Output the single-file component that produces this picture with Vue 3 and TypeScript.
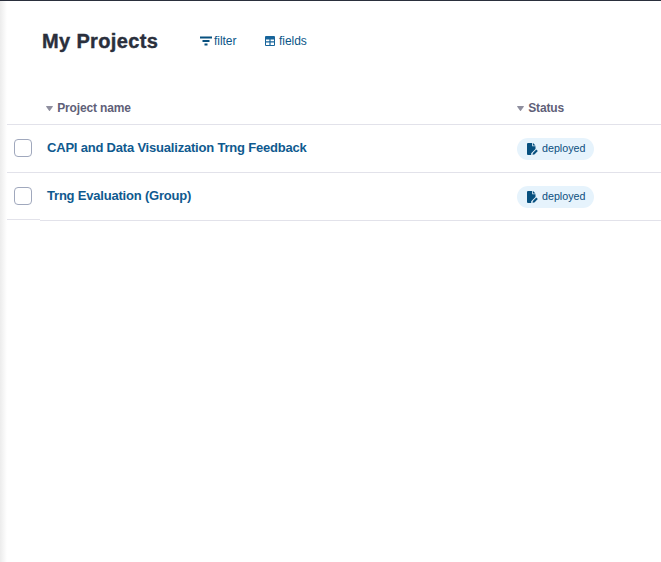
<template>
  <div class="page">
    <header class="top">
      <h1 class="title">My Projects</h1>
      <button class="tool tool-filter">
        <svg width="12" height="10" viewBox="0 0 12 10"><path d="M0 .5h12v2H0zM2.500 4h7v2h-7zM4.500 7.500h3v2h-3z" fill="#07507f" /></svg>
        filter
      </button>
      <button class="tool tool-fields">
        <svg width="10" height="10" viewBox="0 0 10 10"><path fill-rule="evenodd" d="M1 0h8a1 1 0 0 1 1 1v8a1 1 0 0 1-1 1H1a1 1 0 0 1-1-1V1a1 1 0 0 1 1-1zM1 3.500V5.200h3.400V3.500zM5.600 3.500V5.200H9V3.500zM1 6.400V9h3.400V6.400zM5.600 6.400V9H9V6.400z" fill="#17649a" /></svg>
        fields
      </button>
    </header>

    <div class="table">
      <div class="row head">
        <div class="name-col">
          <svg class="caret" width="7" height="5" viewBox="0 0 7 5"><path d="M.6 0h5.800a.5.500 0 0 1 .4.800L3.900 4.700a.5.500 0 0 1-.8 0L.2.800A.5.500 0 0 1 .6 0z" fill="#8f8f9f" /></svg>
          Project name
        </div>
        <div class="status-col">
          <svg class="caret" width="7" height="5" viewBox="0 0 7 5"><path d="M.6 0h5.800a.5.500 0 0 1 .4.800L3.900 4.700a.5.500 0 0 1-.8 0L.2.800A.5.500 0 0 1 .6 0z" fill="#8f8f9f" /></svg>
          Status
        </div>
      </div>
      <div v-for="project in projects" :key="project" class="row body">
        <span class="check"></span>
        <a class="name">{{ project }}</a>
        <div class="status-col">
          <span class="pill">
            <svg width="11" height="12" viewBox="0 0 11 12">
              <path d="M1 0h4.200v3.300h3.300v2.700L4.200 10.300V12H1a1 1 0 0 1-1-1V1a1 1 0 0 1 1-1z" fill="#07507f" />
              <path d="M6 0l2.500 2.500H6z" fill="#07507f" />
              <path d="M5.500 11.800l.4-1.900 3.400-3.400 1.500 1.500-3.400 3.400z" fill="#07507f" />
            </svg>
            <span class="pill-text">deployed</span>
          </span>
        </div>
      </div>
    </div>
  </div>
</template>

<script setup lang="ts">
const projects: string[] = ["CAPI and Data Visualization Trng Feedback", "Trng Evaluation (Group)"];
</script>

<style>
html, body { margin: 0; background: #fff; }
</style>

<style scoped>
.page {
  box-sizing: border-box;
  width: 661px;
  height: 562px;
  overflow: hidden;
  border-top: 1px solid #2a2f3c;
  padding-left: 7px;
  background: linear-gradient(to right, #ececec, #fff 7px);
  font-family: "Liberation Sans", Arial, sans-serif;
}

.top {
  display: flex;
  align-items: center;
  height: 80px;
  padding-left: 35px;
}

.title {
  width: 158px;
  margin: 0;
  font-size: 20px;
  font-weight: 700;
  letter-spacing: 0.36px;
  color: #2a2f3c;
  -webkit-text-stroke: 0.4px #2a2f3c;
}

.tool {
  display: flex;
  align-items: center;
  padding: 0;
  border: 0;
  background: none;
  font: 12px "Liberation Sans", Arial, sans-serif;
  letter-spacing: -0.05px;
  color: #0b5688;
}

.tool-filter { width: 65px; gap: 2px; }
.tool-fields { gap: 4px; }

.row {
  position: relative;
  display: flex;
  align-items: center;
  box-sizing: border-box;
  border-bottom: 1px solid #e2e2ea;
  background: #fff;
}

.head {
  height: 44px;
  padding-top: 10px;
  font-size: 12px;
  font-weight: 700;
  letter-spacing: -0.15px;
  color: #5f5f78;
}

.body { height: 48px; }

/* the checkbox cell's rule sits a pixel higher on the last row */
.body:last-child::before {
  content: "";
  position: absolute;
  left: 0;
  bottom: -1px;
  width: 33px;
  height: 1px;
  border-top: 1px solid #e2e2ea;
  background: #fff;
}

.name-col {
  width: 508px;
  padding-left: 39px;
  box-sizing: border-box;
}

.caret {
  margin-right: 1px;
  vertical-align: 1px;
}

.check {
  box-sizing: border-box;
  width: 18px;
  height: 18px;
  margin-left: 7px;
  margin-bottom: 1px;
  border: 1px solid #a0a8bd;
  border-radius: 4px;
}

.name {
  width: 468px;
  margin-left: 15px;
  margin-top: -3px;
  font-size: 13px;
  font-weight: 700;
  letter-spacing: -0.2px;
  color: #0f5a8f;
}

.status-col {
  margin-left: 2px;
}

.pill {
  display: inline-flex;
  align-items: center;
  gap: 4px;
  height: 22px;
  padding: 0 9px 0 10px;
  border-radius: 11px;
  background: #e6f3fc;
  font-size: 10.700px;
  color: #0b4f80;
}

.pill-text {
  margin-top: -1px;
}
</style>
